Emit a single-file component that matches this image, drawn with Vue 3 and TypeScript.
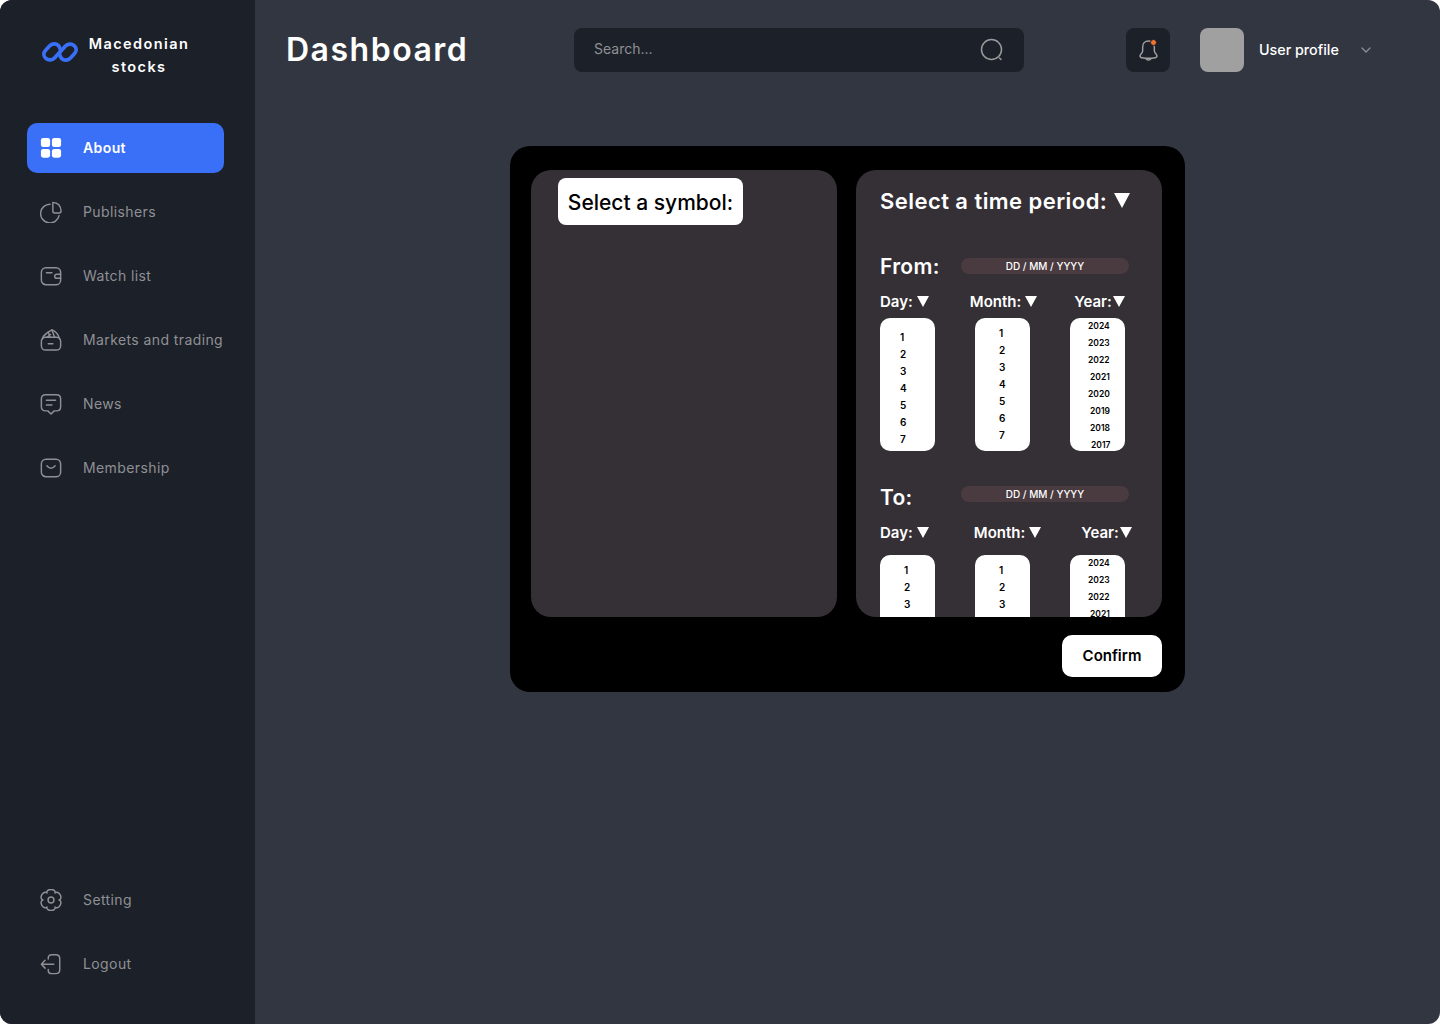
<template>
  <div class="shell">
    <aside class="sidebar">
      <div class="brand">
        <svg class="brand-logo" width="36" height="20" viewBox="0 0 36 20" fill="none" stroke="#3a6ff8" stroke-width="3.7" stroke-linecap="round" stroke-linejoin="round">
          <path d="M18 10 L12.5 16 C10.5 18.2 6.5 18.8 3.8 16.4 C1.2 14 1.4 10.6 3.4 8.4 L7.5 4 C10 1.3 14 1.2 16.2 3.4 C17.6 4.8 18 6 18.6 8" />
          <path d="M18 10 L23.5 4 C25.5 1.8 29.5 1.2 32.2 3.6 C34.8 6 34.6 9.4 32.6 11.6 L28.5 16 C26 18.7 22 18.8 19.8 16.6 C18.4 15.2 18 14 17.4 12" />
        </svg>
        <div class="brand-name">Macedonian<br />stocks</div>
      </div>

      <nav class="nav">
        <a v-for="item in mainNav" :key="item.label" class="nav-item" :class="{ active: item.active }">
          <svg class="nav-icon" width="22" height="22" viewBox="0 0 24 24" fill="none" stroke="currentColor" stroke-width="1.6" stroke-linecap="round" stroke-linejoin="round" v-html="item.icon"></svg>
          <span>{{ item.label }}</span>
        </a>
      </nav>

      <nav class="nav nav-bottom">
        <a v-for="item in bottomNav" :key="item.label" class="nav-item">
          <svg class="nav-icon" width="22" height="22" viewBox="0 0 24 24" fill="none" stroke="currentColor" stroke-width="1.6" stroke-linecap="round" stroke-linejoin="round" v-html="item.icon"></svg>
          <span>{{ item.label }}</span>
        </a>
      </nav>
    </aside>

    <main class="main">
      <header class="topbar">
        <h1 class="title">Dashboard</h1>
        <div class="search">
          <input type="text" placeholder="Search..." aria-label="Search" />
          <svg width="26" height="26" viewBox="0 0 26 26" fill="none" stroke="#9a9a9a" stroke-width="1.5" stroke-linecap="round">
            <circle cx="12.5" cy="12.5" r="10" />
            <path d="M20.5 21 L22 22.5" />
          </svg>
        </div>
        <button class="bell" aria-label="Notifications">
          <svg width="27" height="27" viewBox="0 0 24 24" fill="none" stroke="#a0a0a0" stroke-width="1.3" stroke-linecap="round" stroke-linejoin="round">
            <path d="M12 3.5 C8.6 3.5 6.8 6 6.8 9 L6.8 12.5 C6.8 14 5.2 15 4.6 16.2 C4.2 17.2 4.8 18.2 6 18.4 C9.8 19 14.2 19 18 18.4 C19.2 18.2 19.8 17.2 19.4 16.2 C18.8 15 17.2 14 17.2 12.5 L17.2 9 C17.2 6 15.4 3.5 12 3.5 Z" />
            <path d="M9.8 19.4 C10.4 20.8 13.6 20.8 14.2 19.4" />
          </svg>
          <i class="bell-dot"></i>
        </button>
        <div class="avatar"></div>
        <span class="user-name">User profile</span>
        <svg class="chevron" width="10" height="6" viewBox="0 0 10 6" fill="none" stroke="#8b8e96" stroke-width="1.3" stroke-linecap="round" stroke-linejoin="round">
          <path d="M1 1 L5 5 L9 1" />
        </svg>
      </header>

      <section class="card">
        <div class="panels">
          <div class="panel panel-symbol">
            <button class="symbol-btn">Select a symbol:</button>
          </div>
          <div class="panel panel-time">
            <h2 class="time-title">Select a time period: <i class="tri tri-lg"></i></h2>

            <div v-for="range in ranges" :key="range.label" class="range" :class="range.cls">
              <div class="range-head">
                <span class="range-label">{{ range.label }}</span>
                <span class="date-pill">DD / MM / YYYY</span>
              </div>
              <div class="pick-labels">
                <span v-for="col in range.cols" :key="col.label" class="pick-label">{{ col.label }}<i class="tri" :class="{ tight: col.tight }"></i></span>
              </div>
              <div class="pickers">
                <ul v-for="col in range.cols" :key="col.label" class="picker" :class="{ years: col.years }">
                  <li v-for="row in col.rows" :key="row.text" :style="{ paddingLeft: row.pad + 'px' }">{{ row.text }}</li>
                </ul>
              </div>
            </div>
          </div>
        </div>
        <div class="card-foot">
          <button class="confirm">Confirm</button>
        </div>
      </section>
    </main>
  </div>
</template>

<script setup lang="ts">
interface NavItem {
  label: string;
  icon: string;
  active?: boolean;
}

interface Row {
  text: string;
  pad: number;
}

const rows = (items: (string | number)[], pads: number[]): Row[] =>
  items.map((v, i) => ({ text: String(v), pad: pads[i] }));

// six rounded lobes around the centre of a 24 box
function gearPath(): string {
  const at = (deg: number, r: number) => {
    const a = (deg * Math.PI) / 180;
    return `${(12 + r * Math.cos(a)).toFixed(2)} ${(12 + r * Math.sin(a)).toFixed(2)}`;
  };
  let d = `M${at(-120, 8.8)}`;
  for (let i = 0; i < 6; i++) {
    const a = -90 + 60 * i;
    d += ` C${at(a - 24, 14)} ${at(a + 24, 14)} ${at(a + 30, 8.8)}`;
  }
  return d + " Z";
}

const mainNav: NavItem[] = [
  {
    label: "About",
    active: true,
    icon: '<g fill="currentColor" stroke="none"><rect x="1" y="1" width="10" height="10" rx="2.5"/><rect x="13" y="1" width="10" height="10" rx="2.5"/><rect x="1" y="13" width="10" height="9.5" rx="2.5"/><rect x="13" y="13" width="10" height="9.5" rx="2.5"/></g>',
  },
  {
    label: "Publishers",
    icon: '<path d="M11 3.5 A10.2 10.2 0 1 0 20.8 16"/><path d="M14 1.5 Q22.5 2 23 11 Q23 13 21 13 H16 Q14 13 14 11 Z"/>',
  },
  {
    label: "Watch list",
    icon: '<rect x="1.5" y="3" width="21" height="18.5" rx="5"/><path d="M7 8.5 H13"/><path d="M22.5 10 H18.5 Q16 10 16 12.2 Q16 14.5 18.5 14.5 H22.5"/>',
  },
  {
    label: "Markets and trading",
    icon: '<rect x="1.5" y="9" width="21" height="14" rx="4.5"/><path d="M9 16 H14"/><path d="M2.5 11 C3.5 6.5 7 5 9 3.5 L13 1 Q19 3 21.5 11"/><path d="M9 3.5 L11 9 M13 1 L16 9 M7.5 9 L11.5 6"/>',
  },
  {
    label: "News",
    icon: '<path d="M6 2 H18 Q22.5 2 22.5 6.5 V15 Q22.5 19.5 18 19.5 H15.5 L12 23 L8.5 19.5 H6 Q1.5 19.5 1.5 15 V6.5 Q1.5 2 6 2 Z"/><path d="M7 8 H17 M7 13 H13"/>',
  },
  {
    label: "Membership",
    icon: '<rect x="1.5" y="2.5" width="21" height="19" rx="5"/><path d="M7.5 9.5 Q12 15 16.5 9.5"/>',
  },
];

const bottomNav: NavItem[] = [
  {
    label: "Setting",
    icon: `<circle cx="12" cy="12" r="3.2"/><path d="${gearPath()}"/>`,
  },
  {
    label: "Logout",
    icon: '<path d="M9 6.5 V5.5 Q9 2 13 2 H17 Q21.5 2 21.5 6 V18.5 Q21.5 22.5 17 22.5 H13 Q9 22.5 9 19 V18"/><path d="M15 12.3 H1.8 M5.5 8 L1.5 12.3 L5.5 16.5"/>',
  },
];

const dayFrom = [1, 2, 3, 4, 5, 6, 7];
const years = [2024, 2023, 2022, 2021, 2020, 2019, 2018, 2017];

const ranges = [
  {
    label: "From:",
    cls: "range-from",
    cols: [
      { label: "Day:", rows: rows(dayFrom, [20, 20, 20, 20, 20, 20, 20]) },
      { label: "Month:", rows: rows(dayFrom, [24, 24, 24, 24, 24, 24, 24]) },
      { label: "Year:", tight: true, years: true, rows: rows(years, [18, 18, 18, 20, 18, 20, 20, 21]) },
    ],
  },
  {
    label: "To:",
    cls: "range-to",
    cols: [
      { label: "Day:", rows: rows([1, 2, 3], [24, 24, 24]) },
      { label: "Month:", rows: rows([1, 2, 3], [24, 24, 24]) },
      { label: "Year:", tight: true, years: true, rows: rows(years.slice(0, 4), [18, 18, 18, 20]) },
    ],
  },
];
</script>

<style>
html,
body {
  margin: 0;
  background: #fff;
}
</style>

<style scoped>
.shell {
  display: flex;
  width: 1440px;
  height: 1024px;
  overflow: hidden;
  border-radius: 12px;
  background: #323641;
  font-family: Inter, "Open Sans", sans-serif;
  color: #fff;
}
.sidebar {
  display: flex;
  flex-direction: column;
  flex: 0 0 255px;
  box-sizing: border-box;
  padding: 32px 0 35px 27px;
  background: #1c2029;
}
.brand {
  display: flex;
  align-items: flex-start;
  padding-left: 15px;
  height: 91px;
}
.brand-logo {
  flex: none;
  margin-top: 10px;
}
.brand-name {
  width: 110px;
  margin-left: 6px;
  text-align: center;
  font-size: 14.5px;
  font-weight: 600;
  line-height: 23px;
  letter-spacing: 1.4px;
  white-space: nowrap;
}
.nav {
  display: flex;
  flex-direction: column;
  gap: 14px;
}
.nav-bottom {
  margin-top: auto;
}
.nav-item {
  display: flex;
  align-items: center;
  width: 197px;
  height: 50px;
  padding-left: 13px;
  box-sizing: border-box;
  border-radius: 10px;
  font-size: 14px;
  letter-spacing: 0.4px;
  color: #8f9094;
  white-space: nowrap;
}
.nav-item span {
  margin-top: -2px;
}
.nav-item.active {
  background: #3a6ff8;
  color: #fff;
  font-weight: 600;
}
.nav-icon {
  flex: none;
  margin-right: 21px;
}
.main {
  flex: 1;
  min-width: 0;
}
.topbar {
  display: flex;
  align-items: center;
  height: 44px;
  padding: 28px 0 0 31px;
}
.title {
  width: 288px;
  flex: none;
  margin: -2px 0 0;
  font-size: 32px;
  font-weight: 600;
  letter-spacing: 1.5px;
}
.search {
  display: flex;
  align-items: center;
  justify-content: space-between;
  flex: none;
  width: 450px;
  height: 44px;
  box-sizing: border-box;
  padding: 0 19px 0 20px;
  border-radius: 8px;
  background: #1c2029;
}
.search input {
  flex: 1;
  min-width: 0;
  margin-top: -4px;
  border: 0;
  outline: 0;
  padding: 0;
  background: transparent;
  font: inherit;
  font-size: 14px;
  color: #fff;
}
.search input::placeholder {
  color: #8f9094;
  opacity: 1;
}
.bell {
  position: relative;
  display: flex;
  align-items: center;
  justify-content: center;
  flex: none;
  width: 44px;
  height: 44px;
  margin-left: 102px;
  padding: 0;
  border: 0;
  border-radius: 8px;
  background: #1c2029;
}
.bell-dot {
  position: absolute;
  top: 11px;
  left: 24px;
  width: 5px;
  height: 5px;
  border: 1px solid #1c2029;
  border-radius: 50%;
  background: #f4722b;
}
.avatar {
  flex: none;
  width: 44px;
  height: 44px;
  margin-left: 30px;
  border-radius: 8px;
  background: #a0a0a0;
}
.user-name {
  margin: -2px 0 0 15px;
  font-size: 14.3px;
  font-weight: 500;
}
.chevron {
  margin-left: 22px;
}
.card {
  box-sizing: border-box;
  width: 675px;
  height: 546px;
  margin: 74px 0 0 255px;
  padding: 24px 23px 15px 21px;
  border-radius: 20px;
  background: #000;
}
.panels {
  display: flex;
  gap: 19px;
  height: 447px;
}
.panel {
  flex: 0 0 306px;
  box-sizing: border-box;
  border-radius: 20px;
  background: #352f36;
  overflow: hidden;
}
.panel-symbol {
  padding: 8px 0 0 27px;
}
.symbol-btn {
  display: block;
  width: 185px;
  height: 47px;
  padding: 2px 0 0;
  border: 0;
  border-radius: 8px;
  background: #fff;
  color: #000;
  font: inherit;
  font-size: 21px;
  font-weight: 500;
}
.panel-time {
  padding: 17px 0 0 24px;
}
.time-title {
  display: flex;
  align-items: center;
  margin: 0;
  height: 28px;
  font-size: 22px;
  font-weight: 600;
  letter-spacing: 0.45px;
  white-space: pre;
}
.tri {
  display: inline-block;
  width: 0;
  height: 0;
  margin-left: 4px;
  border-left: 6px solid transparent;
  border-right: 6px solid transparent;
  border-top: 11px solid #fff;
}
.tri.tight {
  margin-left: 1px;
}
.tri-lg {
  margin: -2px 0 0 1px;
  border-left-width: 8px;
  border-right-width: 8px;
  border-top-width: 15px;
}
.range-from {
  margin-top: 38px;
}
.range-to {
  margin-top: 33px;
}
.range-head {
  display: flex;
  align-items: center;
  height: 26px;
}
.range-label {
  width: 81px;
  font-size: 21px;
  font-weight: 600;
  letter-spacing: 0.3px;
}
.date-pill {
  width: 168px;
  height: 16px;
  border-radius: 8px;
  background: #4a3b40;
  text-align: center;
  font-size: 10px;
  font-weight: 500;
  line-height: 16px;
}
.range-to .date-pill {
  margin-top: -6px;
}
.pick-labels {
  display: flex;
  margin-top: 12px;
  height: 20px;
  align-items: center;
}
.pick-label {
  display: flex;
  align-items: center;
  font-size: 15px;
  font-weight: 600;
  white-space: nowrap;
}
.range-from .pick-label:nth-child(2) {
  margin-left: 41px;
}
.range-from .pick-label:nth-child(3) {
  margin-left: 37px;
}
.range-to .pick-label:nth-child(2) {
  margin-left: 45px;
}
.range-to .pick-label:nth-child(3) {
  margin-left: 40px;
}
.pickers {
  display: flex;
  gap: 40px;
  margin-top: 7px;
}
.range-to .pickers {
  margin-top: 13px;
}
.picker {
  box-sizing: border-box;
  flex: none;
  width: 55px;
  height: 133px;
  margin: 0;
  padding: 11px 0 0;
  overflow: hidden;
  list-style: none;
  border-radius: 10px;
  background: #fff;
  color: #000;
  font-size: 10px;
  font-weight: 600;
  line-height: 17px;
}
.picker:nth-child(2) {
  padding-top: 7px;
}
.picker.years {
  padding-top: 0;
  font-size: 8.5px;
}
.range-to .picker {
  padding-top: 7px;
}
.range-to .picker.years {
  padding-top: 0;
}
.card-foot {
  display: flex;
  justify-content: flex-end;
  margin-top: 18px;
}
.confirm {
  width: 100px;
  height: 42px;
  padding: 0 0 2px;
  border: 0;
  border-radius: 10px;
  background: #fff;
  color: #000;
  font: inherit;
  font-size: 15px;
  font-weight: 600;
}
</style>
